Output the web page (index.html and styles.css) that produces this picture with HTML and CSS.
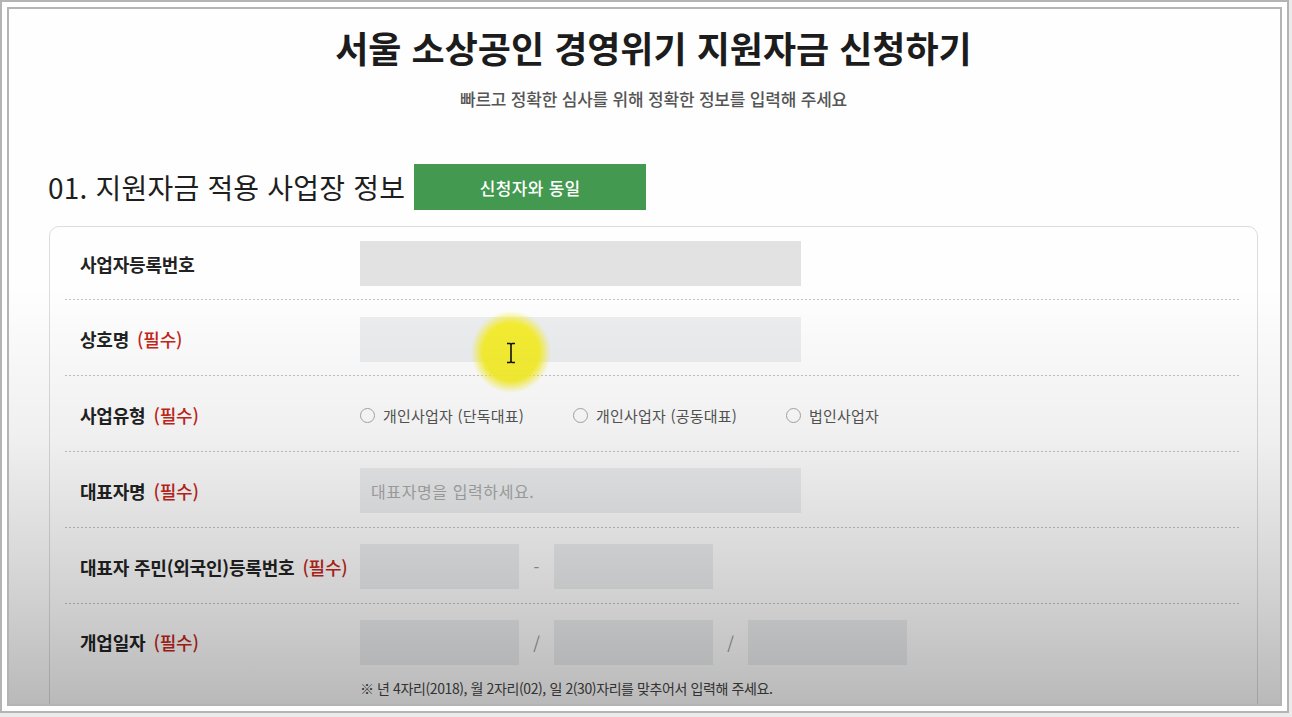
FILE: index.html
```html
<!DOCTYPE html>
<html lang="ko">
<head>
    <meta charset="UTF-8">
    <meta name="viewport" content="width=device-width, initial-scale=1.0">
    <title>서울 소상공인 경영위기 지원자금 신청하기</title>
    <link rel="stylesheet" href="styles.css">
</head>
<body>
    <div class="frame">
        <div class="screen">
            <div class="page">
                <h1 class="title">서울 소상공인 경영위기 지원자금 신청하기</h1>
                <p class="subtitle">빠르고 정확한 심사를 위해 정확한 정보를 입력해 주세요</p>

                <div class="section-head">
                    <h2>01. 지원자금 적용 사업장 정보</h2>
                    <button class="same-btn" type="button">신청자와 동일</button>
                </div>

                <div class="card">
                    <div class="row">
                        <div class="label">사업자등록번호</div>
                        <div class="field"><input class="input input-readonly" type="text"></div>
                    </div>
                    <div class="row">
                        <div class="label">상호명 <span class="req">(필수)</span></div>
                        <div class="field"><input class="input" type="text"></div>
                    </div>
                    <div class="row">
                        <div class="label">사업유형 <span class="req">(필수)</span></div>
                        <div class="field radios">
                            <label class="radio-item"><span class="radio"></span>개인사업자 (단독대표)</label>
                            <label class="radio-item"><span class="radio"></span>개인사업자 (공동대표)</label>
                            <label class="radio-item"><span class="radio"></span>법인사업자</label>
                        </div>
                    </div>
                    <div class="row">
                        <div class="label">대표자명 <span class="req">(필수)</span></div>
                        <div class="field"><input class="input" type="text" placeholder="대표자명을 입력하세요."></div>
                    </div>
                    <div class="row">
                        <div class="label">대표자 주민(외국인)등록번호 <span class="req">(필수)</span></div>
                        <div class="field split">
                            <input class="input short" type="text">
                            <span class="sep">-</span>
                            <input class="input short" type="text">
                        </div>
                    </div>
                    <div class="row">
                        <div class="label">개업일자 <span class="req">(필수)</span></div>
                        <div class="field">
                            <div class="split">
                                <input class="input short" type="text">
                                <span class="sep">/</span>
                                <input class="input short" type="text">
                                <span class="sep">/</span>
                                <input class="input short" type="text">
                            </div>
                            <p class="note">※ 년 4자리(2018), 월 2자리(02), 일 2(30)자리를 맞추어서 입력해 주세요.</p>
                        </div>
                    </div>
                </div>
            </div>

            <!-- 마우스 커서 강조 -->
            <div class="cursor-spot">
                <svg width="10" height="22" viewBox="0 0 10 22">
                    <path d="M1 1.5h3l1 1 1-1h3M5 2.5v17M1 20.5h3l1-1 1 1h3" fill="none" stroke="#111" stroke-width="1.6"/>
                </svg>
            </div>
        </div>
    </div>
</body>
</html>
```

FILE: styles.css
```css
* {
    box-sizing: border-box;
}
body {
    margin: 0;
    background-color: #ebebeb;
    font-family: "Noto Sans CJK KR", "Noto Sans", sans-serif;
    color: #222;
}
.frame {
    width: 1289px;
    height: 713px;
    border: 2px solid #b4b4b4;
    background-color: #fff;
    padding: 5px;
}
.screen {
    position: relative;
    height: 100%;
    border: 2px solid #b4b4b4;
    background-color: #fefefe;
    overflow: hidden;
}
/* 화면 아래쪽으로 어두워지는 효과 */
.screen::after {
    content: "";
    position: absolute;
    left: 0;
    top: 0;
    right: 0;
    bottom: 0;
    pointer-events: none;
    background: linear-gradient(to bottom,
        rgba(0,0,0,0) 0%,
        rgba(0,0,0,0) 40%,
        rgba(0,0,0,0.06) 62%,
        rgba(0,0,0,0.18) 85%,
        rgba(0,0,0,0.27) 100%);
}
.page {
    width: 1209px;
    margin-left: 40px;
    padding-top: 16px;
}
.title {
    margin: 0;
    text-align: center;
    font-size: 36px;
    line-height: 44px;
    font-weight: 700;
    color: #1c1c1c;
}
.subtitle {
    margin: 19px 0 0;
    text-align: center;
    font-size: 17px;
    line-height: 22px;
    font-weight: 500;
    letter-spacing: -0.2px;
    color: #555;
}
.section-head {
    display: flex;
    align-items: center;
    gap: 9px;
    margin-top: 54px;
    margin-left: -1px;
}
.section-head h2 {
    margin: 0;
    font-size: 28px;
    font-weight: 400;
    color: #1e1e1e;
    letter-spacing: 0.2px;
}
.same-btn {
    width: 232px;
    height: 46px;
    border: none;
    background-color: #43994f;
    color: #fff;
    font-family: inherit;
    font-size: 17px;
    font-weight: 500;
    letter-spacing: 0.3px;
    cursor: pointer;
}
.card {
    margin-top: 16px;
    border: 1px solid #dcdcdc;
    border-radius: 10px;
    padding: 0 17px 0 15px;
    height: 520px;
}
.row {
    display: grid;
    grid-template-columns: 280px 1fr;
    align-items: start;
    padding: 15.4px 0 14.4px 15px;
    border-bottom: 1px solid transparent;
    background: linear-gradient(to right, #c2c2c2 2px, transparent 2px) left bottom / 4px 1px repeat-x;
}
.row:first-child {
    padding-top: 14px;
}
.row:last-child {
    background: none;
}
.label {
    height: 45px;
    display: flex;
    align-items: center;
    font-size: 18px;
    font-weight: 700;
    letter-spacing: -0.2px;
    color: #222;
}
.req {
    margin-left: 8px;
    color: #c4261a;
    font-weight: 500;
}
.input {
    display: block;
    width: 441px;
    height: 45px;
    border: none;
    background-color: #eceeef;
    padding: 0 11px;
    font-family: inherit;
    font-size: 16px;
    letter-spacing: 0.6px;
    color: #333;
}
.input::placeholder {
    color: #a9a9a9;
}
.input-readonly {
    background-color: #e2e2e2;
}
.split {
    display: flex;
    align-items: center;
}
.input.short {
    width: 159px;
}
.sep {
    width: 35px;
    text-align: center;
    color: #9a9a9a;
    font-size: 17px;
}
.radios {
    display: flex;
    align-items: center;
    height: 45px;
}
.radio-item {
    flex: none;
    width: 213px;
    display: flex;
    align-items: center;
    gap: 8px;
    font-size: 15px;
    letter-spacing: 0.2px;
    color: #555;
}
.radio-item:last-child {
    width: auto;
}
.radio {
    width: 15px;
    height: 15px;
    border: 1px solid #a8a8a8;
    border-radius: 50%;
    background-color: #fff;
}
.note {
    margin: 13px 0 0;
    font-size: 14px;
    line-height: 20px;
    letter-spacing: -0.4px;
    color: #444;
}
.cursor-spot {
    position: absolute;
    left: 462px;
    top: 302px;
    width: 80px;
    height: 82px;
    border-radius: 50%;
    background: radial-gradient(closest-side, rgba(246,238,40,0.95) 70%, rgba(246,238,40,0) 100%);
    display: flex;
    align-items: center;
    justify-content: center;
}
.cursor-spot svg {
    margin-top: 2px;
}
```
